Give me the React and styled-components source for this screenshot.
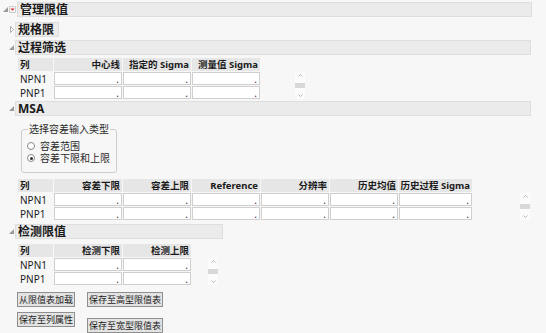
import React from "react";
import styled, { createGlobalStyle } from "styled-components";

const Global = createGlobalStyle`
  html, body { margin: 0; padding: 0; background: #f7f7f7; }
  body {
    font-family: "Noto Sans", "Noto Sans CJK SC", sans-serif;
    color: #1e1e1e;
    width: 546px;
    height: 333px;
    overflow: hidden;
  }
`;

const Page = styled.div`
  display: flex;
  flex-direction: column;
  padding-top: 2px;
`;

const OutlineBox = styled.div`
  display: flex;
  flex-direction: column;
  margin-top: ${(p) => p.$mt || 0}px;
`;

const OutlineHead = styled.div`
  display: flex;
  align-items: center;
  height: 15px;
`;

const DiscWrap = styled.span`
  display: inline-flex;
  width: ${(p) => p.$w}px;
  justify-content: flex-end;
  align-items: center;
  padding-right: 1px;
  box-sizing: border-box;
`;

const TitleBar = styled.div`
  box-sizing: border-box;
  height: 15px;
  display: flex;
  align-items: center;
  padding-left: 2px;
  padding-right: 4px;
  background: #ebebeb;
  border: 1px solid #dedede;
  font-size: 12px;
  font-weight: 700;
  color: #1a1a1a;
  width: ${(p) => (p.$w ? `${p.$w}px` : "auto")};
  white-space: nowrap;
  line-height: 1;
`;

const OutlineBody = styled.div`
  display: flex;
  flex-direction: column;
  padding-left: ${(p) => p.$indent || 0}px;
`;

const TableRow = styled.div`
  display: flex;
  align-items: flex-end;
  margin-top: ${(p) => p.$mt || 0}px;
  margin-left: 2px;
`;

const Grid = styled.div`
  display: grid;
  grid-template-columns: ${(p) => p.$cols};
  grid-auto-rows: 13px;
  column-gap: 1px;
  row-gap: 1px;
  font-size: 10px;
`;

const HeadCell = styled.div`
  background: #e6e6e6;
  font-weight: 700;
  font-size: 9.5px;
  display: flex;
  align-items: center;
  justify-content: ${(p) => (p.$left ? "flex-start" : "flex-end")};
  padding: 0 2px;
  white-space: nowrap;
  line-height: 1;
  color: #1a1a1a;
`;

const LabelCell = styled.div`
  display: flex;
  align-items: center;
  padding-left: 2px;
  line-height: 1;
  color: #1a1a1a;
`;

const DataCell = styled.div`
  box-sizing: border-box;
  background: #ffffff;
  border: 1px solid #cfcfcf;
  display: flex;
  align-items: flex-end;
  justify-content: flex-end;
  padding: 0 2px 0 0;
  font-size: 10px;
  line-height: 10px;
  color: #333;
`;

const Scroll = styled.div`
  display: flex;
  flex-direction: column;
  align-items: center;
  justify-content: space-between;
  width: 10px;
  height: 27px;
  margin-left: ${(p) => p.$ml}px;
  background: #fbfbfb;
  padding: 2px 0;
  box-sizing: border-box;
`;

const Thumb = styled.div`
  width: 10px;
  height: 5px;
  background: #d8d8d8;
`;

const GroupBox = styled.fieldset`
  margin: 7px 0 0 5px;
  padding: 5px 0 8px 5px;
  width: 96px;
  box-sizing: border-box;
  border: 1px solid #cdcdcd;
  border-radius: 3px;
  display: flex;
  flex-direction: column;
`;

const Legend = styled.legend`
  font-size: 10px;
  padding: 0 1px;
  margin-left: 1px;
  color: #2a2a2a;
  line-height: 12px;
`;

const RadioRow = styled.label`
  display: flex;
  align-items: center;
  gap: 5px;
  font-size: 10px;
  line-height: 12px;
  height: 12px;
  color: #2a2a2a;
`;

const RadioDot = styled.span`
  width: 6px;
  height: 6px;
  border: 1px solid #8a8a8a;
  border-radius: 50%;
  background: #fff;
  display: inline-flex;
  align-items: center;
  justify-content: center;
  &::after {
    content: "";
    width: 3px;
    height: 3px;
    border-radius: 50%;
    background: ${(p) => (p.$on ? "#333" : "transparent")};
  }
`;

const ButtonArea = styled.div`
  display: flex;
  gap: 12px;
  margin-top: 7px;
  margin-left: 17px;
`;

const ButtonCol = styled.div`
  display: flex;
  flex-direction: column;
  gap: ${(p) => p.$gap}px;
`;

const Btn = styled.button`
  font-family: "Noto Sans CJK SC", "Noto Sans", sans-serif;
  font-size: 9px;
  height: 15px;
  line-height: 13px;
  padding: 0 1px;
  background: #e3e3e3;
  border: 1px solid #8f8f8f;
  color: #222;
  border-radius: 0;
  align-self: flex-start;
`;

const OpenTri = () => (
  <svg width="5" height="5" viewBox="0 0 5 5">
    <path d="M5 0 L5 5 L0 5 Z" fill="#9a9a9a" />
  </svg>
);

const ClosedTri = () => (
  <svg width="4" height="7" viewBox="0 0 4 7">
    <path d="M0.5 0.5 L3.5 3.5 L0.5 6.5 Z" fill="#fff" stroke="#9a9a9a" strokeWidth="0.8" />
  </svg>
);

const RedMenu = () => (
  <svg width="7" height="7" viewBox="0 0 7 7" style={{ marginRight: 1 }}>
    <rect x="0.5" y="0.5" width="6" height="6" fill="#f4f4f4" stroke="#d0d0d0" />
    <path d="M1.5 2.5 L5.5 2.5 L3.5 4.8 Z" fill="#e0262b" />
  </svg>
);

const Chev = ({ up }) => (
  <svg width="5" height="3" viewBox="0 0 5 3">
    <path d={up ? "M0.5 2.5 L2.5 0.5 L4.5 2.5" : "M0.5 0.5 L2.5 2.5 L4.5 0.5"} fill="none" stroke="#a8a8a8" strokeWidth="0.8" />
  </svg>
);

const ScrollStub = ({ ml }) => (
  <Scroll $ml={ml}>
    <Chev up />
    <Thumb />
    <Chev />
  </Scroll>
);

const DataTable = ({ cols, headers, rows }) => (
  <Grid $cols={cols}>
    <HeadCell $left>列</HeadCell>
    {headers.map((h) => (
      <HeadCell key={h}>{h}</HeadCell>
    ))}
    {rows.map((r) => (
      <React.Fragment key={r}>
        <LabelCell>{r}</LabelCell>
        {headers.map((h) => (
          <DataCell key={h}>.</DataCell>
        ))}
      </React.Fragment>
    ))}
  </Grid>
);

const Section = ({ title, open = true, mt, barW, children }) => (
  <OutlineBox $mt={mt}>
    <OutlineHead>
      <DiscWrap $w={15}>{open ? <OpenTri /> : <ClosedTri />}</DiscWrap>
      <TitleBar $w={barW}>{title}</TitleBar>
    </OutlineHead>
    {open && <OutlineBody $indent={16}>{children}</OutlineBody>}
  </OutlineBox>
);

const rows = ["NPN1", "PNP1"];

export default function App() {
  return (
    <>
      <Global />
      <Page>
        <OutlineBox>
          <OutlineHead>
            <DiscWrap $w={9}>
              <OpenTri />
            </DiscWrap>
            <RedMenu />
            <TitleBar $w={515}>管理限值</TitleBar>
          </OutlineHead>
          <OutlineBody>
            <Section title="规格限" open={false} mt={5} />
            <Section title="过程筛选" mt={3} barW={516}>
              <TableRow $mt={3}>
                <DataTable
                  cols="35px 68px 68px 68px"
                  headers={["中心线", "指定的 Sigma", "测量值 Sigma"]}
                  rows={rows}
                />
                <ScrollStub ml={35} />
              </TableRow>
            </Section>
            <Section title="MSA" mt={2} barW={516}>
              <GroupBox>
                <Legend>选择容差输入类型</Legend>
                <RadioRow>
                  <RadioDot />
                  容差范围
                </RadioRow>
                <RadioRow>
                  <RadioDot $on />
                  容差下限和上限
                </RadioRow>
              </GroupBox>
              <TableRow $mt={6}>
                <DataTable
                  cols="35px 68px 68px 68px 68px 68px 73px"
                  headers={["容差下限", "容差上限", "Reference", "分辨率", "历史均值", "历史过程 Sigma"]}
                  rows={rows}
                />
                <ScrollStub ml={48} />
              </TableRow>
            </Section>
            <Section title="检测限值" mt={4} barW={208}>
              <TableRow $mt={5}>
                <DataTable
                  cols="35px 68px 68px"
                  headers={["检测下限", "检测上限"]}
                  rows={rows}
                />
                <ScrollStub ml={17} />
              </TableRow>
            </Section>
            <ButtonArea>
              <ButtonCol $gap={5}>
                <Btn>从限值表加载</Btn>
                <Btn>保存至列属性</Btn>
              </ButtonCol>
              <ButtonCol $gap={11}>
                <Btn>保存至高型限值表</Btn>
                <Btn>保存至宽型限值表</Btn>
              </ButtonCol>
            </ButtonArea>
          </OutlineBody>
        </OutlineBox>
      </Page>
    </>
  );
}
